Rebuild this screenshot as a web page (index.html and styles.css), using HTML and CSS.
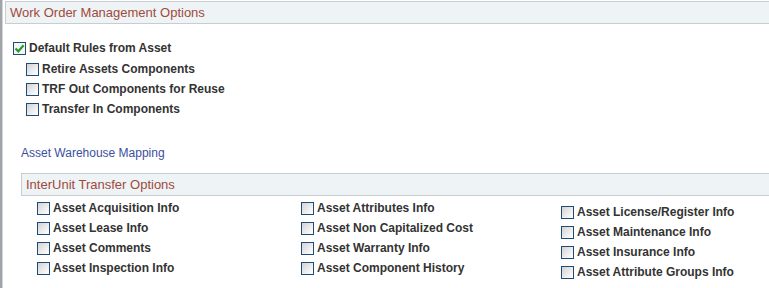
FILE: index.html
```html
<!DOCTYPE html>
<html lang="en">
  <head>
    <meta charset="UTF-8" />
    <title>Work Order Management Options</title>
    <link rel="stylesheet" href="styles.css">
  </head>
  <body>
    <div class="page">
      <div class="edge"></div>
      <main class="content">
        <section class="group">
          <h2 class="group-title">Work Order Management Options</h2>
          <div class="rules">
            <label class="opt">
              <span class="cb checked">
                <svg width="11" height="11" viewBox="0 0 11 11"><path d="M1.5 5.5 L4.3 8.3 L9.6 2.2" fill="none" stroke="#2c9a2c" stroke-width="2.2"/></svg>
              </span>
              Default Rules from Asset
            </label>
            <div class="sub">
              <label class="opt"><span class="cb"></span>Retire Assets Components</label>
              <label class="opt"><span class="cb"></span>TRF Out Components for Reuse</label>
              <label class="opt"><span class="cb"></span>Transfer In Components</label>
            </div>
          </div>
        </section>

        <a class="map-link" href="#">Asset Warehouse Mapping</a>

        <section class="group inter">
          <h2 class="group-title">InterUnit Transfer Options</h2>
          <div class="opt-grid">
            <div class="col">
              <label class="opt"><span class="cb"></span>Asset Acquisition Info</label>
              <label class="opt"><span class="cb"></span>Asset Lease Info</label>
              <label class="opt"><span class="cb"></span>Asset Comments</label>
              <label class="opt"><span class="cb"></span>Asset Inspection Info</label>
            </div>
            <div class="col">
              <label class="opt"><span class="cb"></span>Asset Attributes Info</label>
              <label class="opt"><span class="cb"></span>Asset Non Capitalized Cost</label>
              <label class="opt"><span class="cb"></span>Asset Warranty Info</label>
              <label class="opt"><span class="cb"></span>Asset Component History</label>
            </div>
            <div class="col col-low">
              <label class="opt"><span class="cb"></span>Asset License/Register Info</label>
              <label class="opt"><span class="cb"></span>Asset Maintenance Info</label>
              <label class="opt"><span class="cb"></span>Asset Insurance Info</label>
              <label class="opt"><span class="cb"></span>Asset Attribute Groups Info</label>
            </div>
          </div>
        </section>
      </main>
    </div>
  </body>
</html>
```

FILE: styles.css
```css
body {
  margin: 0;
  background: #fff;
  font-family: "Liberation Sans", Arial, sans-serif;
  overflow: hidden;
}
.page {
  display: flex;
  min-height: 288px;
}
.edge {
  width: 2px;
  background: #9fa4a9;
  border-right: 1px solid #d4d6d8;
  flex-shrink: 0;
}
.content {
  flex: 1;
  padding-left: 2px;
  padding-top: 1px;
}
.group-title {
  margin: 0 -20px 0 0;
  height: 23px;
  box-sizing: border-box;
  border: 1px solid #c9cdd1;
  background: #eef3f5;
  color: #a04a3c;
  font-size: 13px;
  font-weight: normal;
  line-height: 21px;
  padding-left: 4px;
}
.rules {
  margin-top: 14px;
  padding-left: 8px;
}
.sub {
  padding-left: 13px;
  padding-top: 1px;
}
.opt {
  display: flex;
  align-items: center;
  gap: 3px;
  height: 20px;
  font-size: 12px;
  font-weight: bold;
  color: #333;
  white-space: nowrap;
}
.cb {
  width: 13px;
  height: 13px;
  box-sizing: border-box;
  border: 1.5px solid #1e4b78;
  background: linear-gradient(135deg, #d2d2d2 0%, #efefef 60%, #fff 100%);
  display: flex;
  align-items: center;
  justify-content: center;
  flex-shrink: 0;
}
.cb.checked {
  background: #f4f6f4;
}
.map-link {
  display: block;
  margin: 26px 0 0 16px;
  height: 16px;
  line-height: 16px;
  font-size: 12px;
  color: #3a4fa0;
  text-decoration: none;
}
.inter {
  margin: 12px 0 0 16px;
}
.opt-grid {
  display: grid;
  grid-template-columns: 264px 260px auto;
  padding: 2px 0 0 16px;
}
.col-low {
  padding-top: 4px;
}
```
